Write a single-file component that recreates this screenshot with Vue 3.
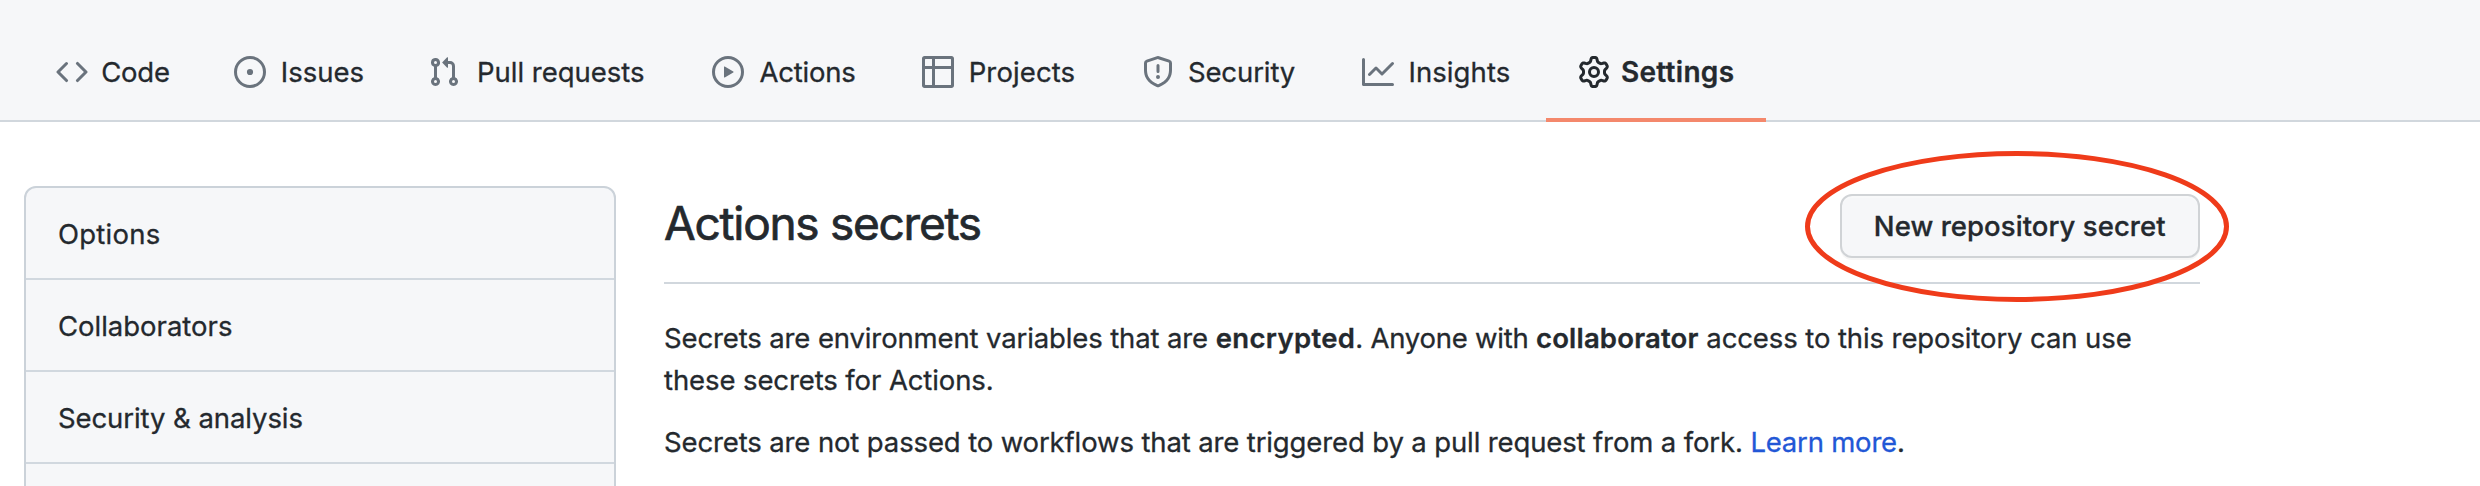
<script setup>
const ring = 'M8 0a8 8 0 100 16A8 8 0 008 0zM1.5 8a6.5 6.5 0 1113 0 6.5 6.5 0 01-13 0z'

const tabs = [
  { id: 'code', label: 'Code', path: 'M4.72 3.22a.75.75 0 011.06 1.06L2.06 8l3.72 3.72a.75.75 0 11-1.06 1.06L.47 8.53a.75.75 0 010-1.06l4.25-4.25zm6.56 0a.75.75 0 10-1.06 1.06L13.94 8l-3.72 3.72a.75.75 0 101.06 1.06l4.25-4.25a.75.75 0 000-1.06l-4.25-4.25z' },
  { id: 'issues', label: 'Issues', path: ring + 'M8 9.55a1.55 1.55 0 100-3.1 1.55 1.55 0 000 3.1z' },
  { id: 'pulls', label: 'Pull requests', path: 'M7.177 3.073L9.573.677A.25.25 0 0110 .854v4.792a.25.25 0 01-.427.177L7.177 3.427a.25.25 0 010-.354zM3.75 2.5a.75.75 0 100 1.5.75.75 0 000-1.5zm-2.25.75a2.25 2.25 0 113 2.122v5.256a2.251 2.251 0 11-1.5 0V5.372A2.25 2.25 0 011.5 3.25zM11 2.5h-1V4h1a1 1 0 011 1v5.628a2.251 2.251 0 101.5 0V5A2.5 2.5 0 0011 2.5zm1 10.25a.75.75 0 111.5 0 .75.75 0 01-1.5 0zM3.75 12a.75.75 0 100 1.5.75.75 0 000-1.5z' },
  { id: 'actions', label: 'Actions', path: ring + 'M6.379 5.227A.25.25 0 006 5.442v5.117a.25.25 0 00.379.214l4.264-2.559a.25.25 0 000-.428L6.379 5.227z' },
  { id: 'projects', label: 'Projects', path: 'M0 1.25C0 .56.56 0 1.25 0h13.5C15.44 0 16 .56 16 1.25v13.5c0 .69-.56 1.25-1.25 1.25H1.25C.56 16 0 15.44 0 14.75V1.25zM1.5 6.5v7.75c0 .138.112.25.25.25H5v-8H1.5zM6.5 6.5v8h7.75a.25.25 0 00.25-.25V6.5h-8zM14.5 5V1.75a.25.25 0 00-.25-.25H6.5V5h8zM5 5V1.5H1.75a.25.25 0 00-.25.25V5H5z' },
  { id: 'security', label: 'Security', path: 'M7.467.133a1.75 1.75 0 011.066 0l5.25 1.68A1.75 1.75 0 0115 3.48V7c0 1.566-.32 3.182-1.303 4.682-.983 1.498-2.585 2.813-5.032 3.855a1.7 1.7 0 01-1.33 0c-2.447-1.042-4.049-2.357-5.032-3.855C1.32 10.182 1 8.566 1 7V3.48a1.75 1.75 0 011.217-1.667l5.25-1.68zm.61 1.429a.25.25 0 00-.153 0l-5.25 1.68a.25.25 0 00-.174.238V7c0 1.358.275 2.666 1.057 3.86.784 1.194 2.121 2.34 4.366 3.297a.2.2 0 00.154 0c2.245-.956 3.582-2.104 4.366-3.298C13.225 9.666 13.5 8.36 13.5 7V3.48a.25.25 0 00-.174-.237l-5.25-1.68zM9 10.5a1 1 0 11-2 0 1 1 0 012 0zm-.25-5.75a.75.75 0 10-1.5 0v3a.75.75 0 001.5 0v-3z' },
  { id: 'insights', label: 'Insights', path: 'M1.5 1.75a.75.75 0 00-1.5 0v12.5c0 .414.336.75.75.75h14.5a.75.75 0 000-1.5H1.5V1.75zm14.28 2.53a.75.75 0 00-1.06-1.06L10 7.94 7.53 5.47a.75.75 0 00-1.06 0L3.22 8.72a.75.75 0 001.06 1.06L7 7.06l2.47 2.47a.75.75 0 001.06 0l5.25-5.25z' },
  { id: 'settings', label: 'Settings', active: true, path: 'M7.429 1.525a6.593 6.593 0 011.142 0c.036.003.108.036.137.146l.289 1.105c.147.56.55.967.997 1.189.174.086.341.183.501.29.417.278.97.423 1.53.27l1.102-.303c.11-.03.175.016.195.046.219.31.41.641.573.989.014.031.022.11-.059.19l-.815.806c-.411.406-.562.957-.53 1.456a4.588 4.588 0 010 .582c-.032.499.119 1.05.53 1.456l.815.806c.08.08.073.159.059.19a6.494 6.494 0 01-.573.99c-.02.029-.086.074-.195.045l-1.103-.303c-.559-.153-1.112-.008-1.529.27-.16.107-.327.204-.5.29-.449.222-.851.628-.998 1.189l-.289 1.105c-.029.11-.101.143-.137.146a6.613 6.613 0 01-1.142 0c-.036-.003-.108-.037-.137-.146l-.289-1.105c-.147-.56-.55-.967-.997-1.189a4.502 4.502 0 01-.501-.29c-.417-.278-.97-.423-1.53-.27l-1.102.303c-.11.03-.175-.016-.195-.046a6.492 6.492 0 01-.573-.989c-.014-.031-.022-.11.059-.19l.815-.806c.411-.406.562-.957.53-1.456a4.587 4.587 0 010-.582c.032-.499-.119-1.05-.53-1.456l-.815-.806c-.08-.08-.073-.159-.059-.19a6.44 6.44 0 01.573-.99c.02-.029.086-.075.195-.045l1.103.303c.559.153 1.112.008 1.529-.27.16-.107.327-.204.5-.29.449-.222.851-.628.998-1.189l.289-1.105c.029-.11.101-.143.137-.146zM8 0c-.236 0-.47.01-.701.03-.743.065-1.29.615-1.458 1.261l-.29 1.106c-.017.066-.078.158-.211.224a5.994 5.994 0 00-.668.386c-.123.082-.233.09-.3.071L3.27 2.776c-.644-.177-1.392.02-1.82.63a7.977 7.977 0 00-.704 1.217c-.315.675-.111 1.422.363 1.891l.815.806c.05.048.098.147.088.294a6.084 6.084 0 000 .772c.01.147-.038.246-.088.294l-.815.806c-.474.469-.678 1.216-.363 1.891.2.428.436.835.704 1.218.428.609 1.176.806 1.82.63l1.103-.303c.066-.019.176-.011.299.071.213.143.436.272.668.386.133.066.194.158.212.224l.289 1.106c.169.646.715 1.196 1.458 1.26a8.094 8.094 0 001.402 0c.743-.064 1.29-.614 1.458-1.26l.29-1.106c.017-.066.078-.158.211-.224a5.98 5.98 0 00.668-.386c.123-.082.233-.09.3-.071l1.102.302c.644.177 1.392-.02 1.82-.63.268-.382.505-.789.704-1.217.315-.675.111-1.422-.364-1.891l-.814-.806c-.05-.048-.098-.147-.088-.294a6.1 6.1 0 000-.772c-.01-.147.039-.246.088-.294l.814-.806c.475-.469.679-1.216.364-1.891a7.992 7.992 0 00-.704-1.218c-.428-.609-1.176-.806-1.82-.63l-1.103.303c-.066.019-.176.011-.299-.071a5.991 5.991 0 00-.668-.386c-.133-.066-.194-.158-.212-.224L10.16 1.29C9.99.645 9.444.095 8.701.031A8.094 8.094 0 008 0zm1.5 8a1.5 1.5 0 11-3 0 1.5 1.5 0 013 0zM11 8a3 3 0 11-6 0 3 3 0 016 0z' },
]

const menu = ['Options', 'Collaborators', 'Security & analysis', '']
</script>

<template>
  <div class="page">
    <nav class="tabs">
      <a v-for="tab in tabs" :key="tab.id" class="tab" :class="[tab.id, { active: tab.active }]">
        <svg class="icon" viewBox="0 0 16 16" aria-hidden="true">
          <path fill-rule="evenodd" :d="tab.path" />
        </svg>
        <span class="label">{{ tab.label }}</span>
      </a>
    </nav>

    <div class="layout">
      <aside class="menu">
        <a v-for="(entry, i) in menu" :key="i" class="menu-item" :class="'menu-item-' + i">{{ entry }}</a>
      </aside>

      <main class="content">
        <header class="head">
          <h1 class="title">Actions secrets</h1>
          <div class="action">
            <button class="btn" type="button">New repository secret</button>
            <svg class="mark" viewBox="0 0 424 151" aria-hidden="true">
              <ellipse cx="212" cy="75.5" rx="209.5" ry="73" />
            </svg>
          </div>
        </header>
        <p class="text"><span class="lead">Secrets are environment variables that are </span><strong class="enc">encrypted</strong><span class="who">. Anyone with </span><strong class="collab">collaborator</strong><span class="rest"> access to this repository can use</span><br><span class="second">these secrets for Actions.</span></p>
        <p class="text"><span class="lead">Secrets are not passed to workflows that are triggered by a pull request from a fork. </span><a class="link">Learn more</a>.</p>
      </main>
    </div>
  </div>
</template>

<style>
body {
  background: #fff;
}
</style>

<style scoped>
.page {
  width: 2480px;
  height: 486px;
  overflow: hidden;
  background: #fff;
  color: #24292e;
  font-family: Inter, "Liberation Sans", sans-serif;
  font-size: 27.5px;
  -webkit-text-stroke: 0.3px currentColor;
}

.tabs {
  display: flex;
  align-items: flex-end;
  box-sizing: border-box;
  height: 122px;
  padding-left: 24px;
  background: #f6f7f9;
  border-bottom: 2px solid #d1d7dd;
}

.tab {
  display: flex;
  align-items: center;
  box-sizing: border-box;
  height: 100px;
  margin-bottom: -2px;
  padding-left: 32px;
  border-top: 4px solid transparent;
  border-bottom: 4px solid transparent;
  white-space: nowrap;
}

.tab.active {
  border-bottom-color: #f4886c;
  font-size: 28px;
  font-weight: 600;
}

.icon {
  flex: none;
  width: 32px;
  height: 32px;
  fill: #6a737d;
}

.active .icon {
  fill: #24292e;
}

.code { width: 178px; letter-spacing: -0.2px; }
.issues { width: 194px; }
.pulls { width: 284px; }
.actions { width: 210px; letter-spacing: -0.2px; }
.projects { width: 220px; letter-spacing: 0.12px; }
.security { width: 220px; letter-spacing: -0.1px; }
.insights { width: 216px; letter-spacing: 0.1px; }
.settings { width: 220px; letter-spacing: 0.3px; }

.code .label { margin-left: 13.2px; }
.issues .label { margin-left: 14.8px; }
.pulls .label { margin-left: 16.9px; }
.actions .label { margin-left: 15.4px; }
.projects .label { margin-left: 14.7px; }
.security .label { margin-left: 13.9px; }
.insights .label { margin-left: 14.4px; }
.settings .label { margin-left: 10.9px; }

.layout {
  display: flex;
  align-items: flex-start;
  gap: 48px;
  padding: 64px 0 0 24px;
}

.menu {
  box-sizing: border-box;
  width: 592px;
  border: 2px solid #cbd2d9;
  border-radius: 12px;
  background: #f6f7f9;
}

.menu-item {
  display: block;
  box-sizing: border-box;
  height: 92px;
  padding: 1px 0 0 31.9px;
  border-bottom: 2px solid #d1d8df;
  line-height: 90px;
}

.menu-item-0 { letter-spacing: 0.25px; }
.menu-item-1 { letter-spacing: 0; }
.menu-item-2 { letter-spacing: -0.07px; }

.content {
  width: 1536px;
}

.head {
  display: flex;
  justify-content: space-between;
  align-items: flex-start;
  box-sizing: border-box;
  height: 98px;
  border-bottom: 2px solid #d1d7dd;
}

.title {
  margin: 0;
  font-size: 46px;
  font-weight: 400;
  line-height: 74px;
  letter-spacing: -1.27px;
  -webkit-text-stroke-width: 0.7px;
}

.action {
  position: relative;
  margin-top: 8px;
}

.btn {
  display: block;
  box-sizing: border-box;
  width: 360px;
  height: 64px;
  padding: 0 0 0 31.8px;
  border: 2px solid #d0d3d6;
  border-radius: 12px;
  background: #f6f7f9;
  box-shadow: 0 2px 0 rgba(27, 31, 35, 0.04), inset 0 2px 0 rgba(255, 255, 255, 0.25);
  color: #24292e;
  font-family: inherit;
  font-size: 27.5px;
  font-weight: 500;
  letter-spacing: 0.06px;
  text-align: left;
}

.mark {
  position: absolute;
  top: -43px;
  left: -35px;
  width: 424px;
  height: 151px;
  fill: none;
  stroke: #ef3b1a;
  stroke-width: 5;
}

.text {
  margin: 33px 0 0;
  line-height: 42px;
  white-space: nowrap;
}

.text + .text {
  margin-top: 20px;
}

strong {
  font-weight: 600;
}

.lead { letter-spacing: -0.127px; }
.enc { letter-spacing: 0.33px; }
.who { letter-spacing: -0.24px; }
.collab { letter-spacing: 0.19px; }
.rest, .second { letter-spacing: -0.1px; }

.link {
  color: #2257d6;
  letter-spacing: -0.2px;
}
</style>
